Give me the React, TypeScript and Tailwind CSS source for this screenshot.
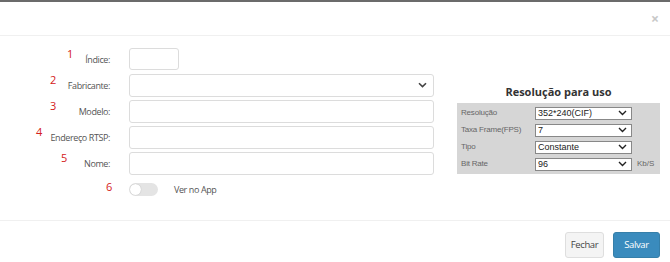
import React from "react";

const Chevron = () => (
  <svg width="9" height="6" viewBox="0 0 9 6" className="absolute right-[6px] top-1/2 -translate-y-1/2">
    <path d="M1 1.2 L4.5 4.6 L8 1.2" fill="none" stroke="#444" strokeWidth="1.6" />
  </svg>
);

const SmallChevron = () => (
  <svg width="9" height="6" viewBox="0 0 9 6" className="absolute right-[4px] top-1/2 -translate-y-1/2">
    <path d="M1 1 L4.5 4.5 L8 1" fill="none" stroke="#222" strokeWidth="1.4" />
  </svg>
);

type Row = { n: string; nx: number; label: string; kind: "short" | "select" | "input" };

const rows: Row[] = [
  { n: "1", nx: 67, label: "Índice:", kind: "short" },
  { n: "2", nx: 50, label: "Fabricante:", kind: "select" },
  { n: "3", nx: 50, label: "Modelo:", kind: "input" },
  { n: "4", nx: 36, label: "Endereço RTSP:", kind: "input" },
  { n: "5", nx: 61, label: "Nome:", kind: "input" },
];

const resRows = [
  { label: "Resolução", value: "352*240(CIF)", unit: "" },
  { label: "Taxa Frame(FPS)", value: "7", unit: "" },
  { label: "Tipo", value: "Constante", unit: "" },
  { label: "Bit Rate", value: "96", unit: "Kb/S" },
];

export default function App() {
  return (
    <div
      className="w-[670px] h-[262px] bg-white border-t-2 border-[#6b6b6b] flex flex-col overflow-hidden"
      style={{ fontFamily: '"Open Sans", "Noto Sans", sans-serif' }}
    >
      <div className="h-[34px] border-b border-[#f0f0f0] flex items-center justify-end pr-[11px] shrink-0">
        <span className="text-[14px] leading-none text-[#c8c8c8] font-bold mt-[1px]">×</span>
      </div>
      <div className="flex flex-1 pt-[12px]">
        <div className="w-[440px] flex flex-col gap-[4px]">
          {rows.map((r) => (
            <div key={r.n} className="relative flex items-center h-[22px]">
              <span
                className="absolute top-[0px] text-[11px] text-[#d42020] leading-none"
                style={{ left: r.nx }}
              >
                {r.n}
              </span>
              <div className="w-[110px] text-right text-[9px] tracking-[-0.4px] text-[#555] leading-none">{r.label}</div>
              <div className="ml-[19px]">
                {r.kind === "short" && (
                  <div className="w-[50px] h-[22px] border border-[#dcdcdc] rounded-[3px]" />
                )}
                {r.kind === "select" && (
                  <div className="relative w-[305px] h-[23px] border border-[#dcdcdc] rounded-[3px]">
                    <Chevron />
                  </div>
                )}
                {r.kind === "input" && (
                  <div className="w-[305px] h-[23px] border border-[#dcdcdc] rounded-[3px]" />
                )}
              </div>
            </div>
          ))}
          <div className="relative flex items-center h-[14px] mt-[4px]">
            <span className="absolute left-[106px] top-[-1px] text-[11px] text-[#d42020] leading-none">6</span>
            <div className="ml-[129px] w-[29px] h-[13px] rounded-full bg-[#e4e4e4] relative">
              <div className="absolute left-[1px] top-[1px] w-[11px] h-[11px] rounded-full bg-white shadow-[0_0_1px_rgba(0,0,0,0.3)]" />
            </div>
            <span className="ml-[16px] text-[9px] tracking-[-0.4px] text-[#555] leading-none">Ver no App</span>
          </div>
        </div>
        <div className="ml-[17px] mt-[38px] flex flex-col items-center w-[203px]">
          <div className="text-[11px] font-bold text-[#333] leading-none mb-[6px]">Resolução para uso</div>
          <div
            className="w-[203px] h-[71px] bg-[#d6d6d6] flex flex-col justify-center gap-[4px] px-[4px]"
            style={{ fontFamily: '"Liberation Sans", Arial, sans-serif' }}
          >
            {resRows.map((rr) => (
              <div key={rr.label} className="flex items-center h-[13px]">
                <div className="w-[74px] text-[8px] tracking-[-0.2px] text-[#666] leading-none whitespace-nowrap">{rr.label}</div>
                <div className="relative w-[97px] h-[13px] bg-white border border-[#888] text-[9px] text-[#222] leading-[11px] pl-[2px]">
                  {rr.value}
                  <SmallChevron />
                </div>
                <span className="ml-[5px] text-[8px] text-[#666] leading-none">{rr.unit}</span>
              </div>
            ))}
          </div>
        </div>
      </div>
      <div className="h-[42px] border-t border-[#f0f0f0] flex items-start justify-end gap-[9px] pr-[10px] pt-[11px] shrink-0">
        <div className="w-[39px] h-[26px] bg-[#f4f4f4] border border-[#dedede] rounded-[3px] flex items-center justify-center text-[9.5px] tracking-[-0.4px] text-[#444]">
          Fechar
        </div>
        <div className="w-[47px] h-[26px] bg-[#3a8bbd] border border-[#367fa9] rounded-[3px] flex items-center justify-center text-[9.5px] tracking-[-0.4px] text-white">
          Salvar
        </div>
      </div>
    </div>
  );
}
